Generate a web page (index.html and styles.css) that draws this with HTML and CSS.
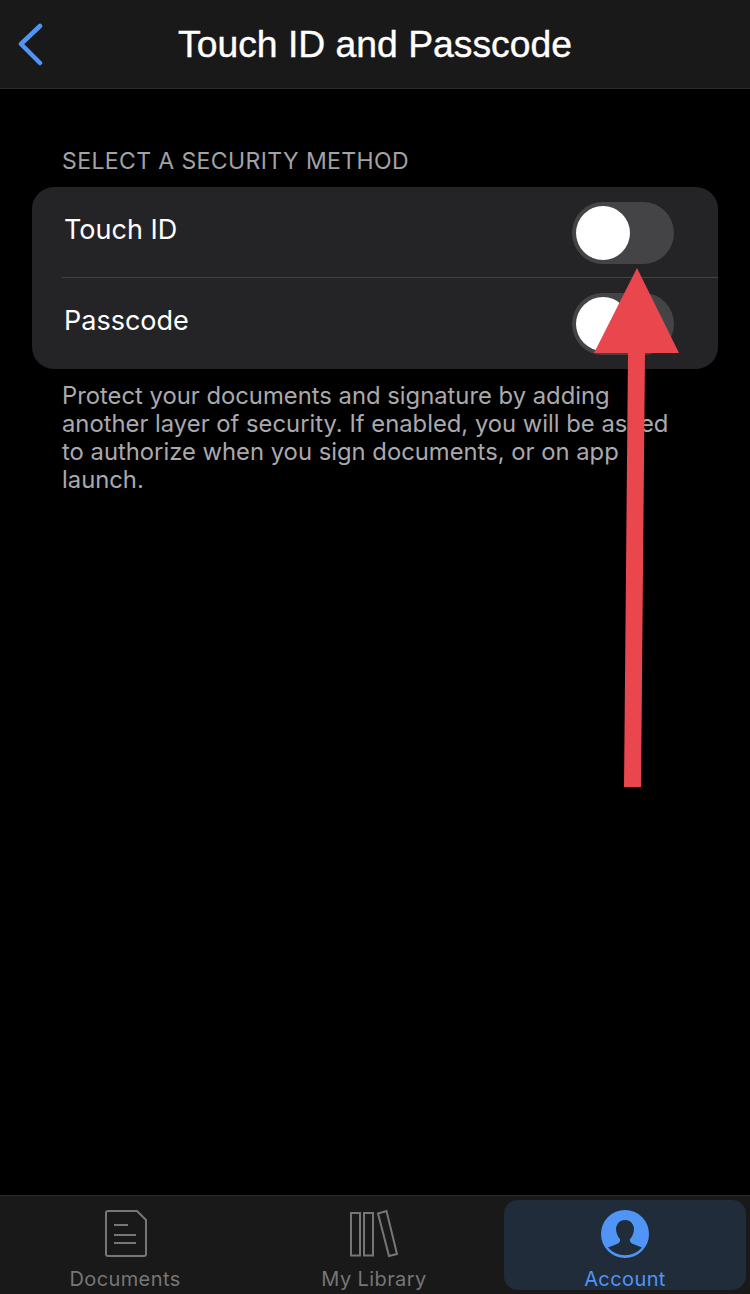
FILE: index.html
```html
<!DOCTYPE html>
<html lang="en">
<head>
    <meta charset="UTF-8">
    <meta name="viewport" content="width=device-width, initial-scale=1.0">
    <title>Touch ID and Passcode</title>
    <link rel="stylesheet" href="styles.css">
</head>
<body>
    <div class="screen">
        <header class="nav-bar">
            <svg class="back-icon" width="44" height="44" viewBox="0 0 44 44">
                <path d="M40 4 L21 22 L40 41" fill="none" stroke="#5095f5" stroke-width="4.500" stroke-linecap="round" stroke-linejoin="round"/>
            </svg>
            <h1>Touch ID and Passcode</h1>
        </header>

        <main class="content">
            <p class="section-label">SELECT A SECURITY METHOD</p>
            <div class="card">
                <div class="row">
                    <span>Touch ID</span>
                    <div class="toggle"><div class="knob"></div></div>
                </div>
                <div class="divider"></div>
                <div class="row">
                    <span>Passcode</span>
                    <div class="toggle"><div class="knob"></div></div>
                </div>
            </div>
            <p class="note">Protect your documents and signature by adding another layer of security. If enabled, you will be asked to authorize when you sign documents, or on app launch.</p>
        </main>

        <nav class="tab-bar">
            <div class="tab">
                <svg width="44" height="50" viewBox="0 0 44 50" fill="none" stroke="#767676" stroke-width="2">
                    <path d="M5 2 H34 L43 11 V45 Q43 47 41 47 H5 Q3 47 3 45 V4 Q3 2 5 2 Z"/>
                    <path d="M11 16 H25 M11 26 H33 M11 34 H33"/>
                </svg>
                <span>Documents</span>
            </div>
            <div class="tab">
                <svg width="50" height="50" viewBox="0 0 50 50" fill="none" stroke="#767676" stroke-width="2">
                    <rect x="2" y="4" width="9" height="42.500"/>
                    <rect x="15" y="4" width="9" height="42.500"/>
                    <path d="M29 4.500 L37.500 2 L48 45 L40 47 Z"/>
                </svg>
                <span>My Library</span>
            </div>
            <div class="tab tab-active">
                <svg width="48" height="50" viewBox="0 0 48 50">
                    <circle cx="24" cy="25" r="24" fill="#5095f5"/>
                    <path d="M24 11 C18 11 15 16 15 20 C15 24 17 28 19 30 C19.500 33 18 34 16 35 L7 38.500 A22.500 22.500 0 0 0 41 38.500 L32 35 C30 34 28.500 33 29 30 C31 28 33 24 33 20 C33 16 30 11 24 11 Z" fill="#202c39"/>
                </svg>
                <span>Account</span>
            </div>
        </nav>

        <svg class="arrow" width="750" height="1294" viewBox="0 0 750 1294">
            <polygon points="637,268 679,353 645,353 641,787 624,787 628,353 594,353" fill="#ea464d"/>
        </svg>
    </div>
</body>
</html>
```

FILE: styles.css
```css
* {
    box-sizing: border-box;
}
html, body {
    margin: 0;
    padding: 0;
}
body {
    font-family: Inter, "Noto Sans", sans-serif;
    background-color: #000;
}
.screen {
    position: relative;
    width: 750px;
    height: 1294px;
    display: flex;
    flex-direction: column;
    overflow: hidden;
}
.nav-bar {
    height: 89px;
    flex-shrink: 0;
    background-color: #191919;
    border-bottom: 1px solid #2a2a2a;
    display: flex;
    align-items: center;
    justify-content: center;
    position: relative;
}
.nav-bar h1 {
    margin: 0;
    color: #fff;
    font-family: "Liberation Sans", Arial, sans-serif;
    font-size: 37.300px;
    font-weight: 400;
    line-height: 44px;
    -webkit-text-stroke: 0.4px #fff;
}
.back-icon {
    position: absolute;
    left: 0;
    top: 22px;
}
.content {
    flex: 1;
    padding: 59px 32px 0;
}
.section-label {
    margin: 0 0 12px 30px;
    color: #a2a2a7;
    font-size: 23px;
    line-height: 27px;
    letter-spacing: 0.4px;
}
.card {
    width: 686px;
    height: 182px;
    background-color: #242426;
    border-radius: 22px;
    display: flex;
    flex-direction: column;
}
.row {
    height: 90px;
    display: flex;
    align-items: center;
    justify-content: space-between;
    padding: 2px 44px 0 32px;
    color: #fff;
    font-size: 27px;
}
.row span {
    padding-bottom: 8px;
}
.divider {
    height: 1px;
    margin-left: 30px;
    background-color: #434345;
}
.toggle {
    width: 102px;
    height: 62px;
    border-radius: 31px;
    background-color: #444447;
    padding: 4px;
}
.knob {
    width: 54px;
    height: 54px;
    border-radius: 50%;
    background-color: #fff;
}
.note {
    margin: 13px 36px 0 30px;
    color: #a9a9ae;
    font-size: 23.800px;
    line-height: 28px;
}
.tab-bar {
    height: 99px;
    flex-shrink: 0;
    background-color: #191919;
    border-top: 1px solid #2a2a2a;
    display: grid;
    grid-template-columns: 250px 248px 248px;
    grid-template-rows: 90px;
    padding: 4px 4px 4px 0;
}
.tab {
    display: flex;
    flex-direction: column;
    align-items: center;
    color: #767676;
    font-size: 20px;
    padding-top: 9px;
    gap: 9px;
}
.tab span {
    line-height: 22px;
    letter-spacing: 0.4px;
}
.tab-active {
    margin-left: 6px;
    background-color: #202c39;
    border-radius: 14px;
    color: #5095f5;
}
.arrow {
    position: absolute;
    left: 0;
    top: 0;
}
```
